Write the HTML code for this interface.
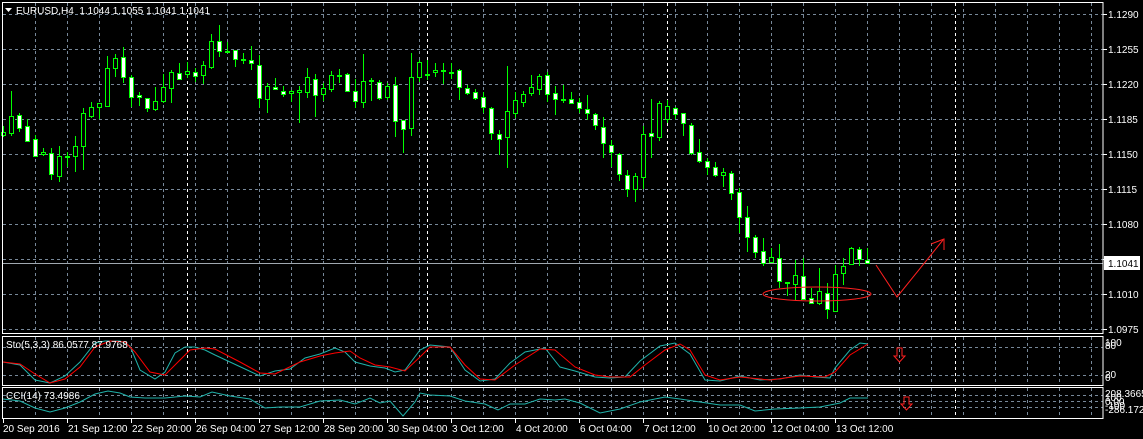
<!DOCTYPE html>
<html><head><meta charset="utf-8">
<style>
html,body{margin:0;padding:0;background:#000;width:1143px;height:439px;overflow:hidden}
svg{display:block}
text{font-family:"Liberation Sans",sans-serif;font-size:10px;fill:#fff}
</style></head>
<body>
<svg id="s" width="1143" height="439" xmlns="http://www.w3.org/2000/svg"></svg>
<script>
var s=document.getElementById('s');var o='';
function L(x1,y1,x2,y2,c,d,w){o+='<line x1="'+x1+'" y1="'+y1+'" x2="'+x2+'" y2="'+y2+'" stroke="'+c+'" stroke-width="'+(w||1)+'"'+(d?' stroke-dasharray="'+d+'"':'')+'/>';}
function T(x,y,t,a,c){o+='<text x="'+x+'" y="'+y+'"'+(a?' text-anchor="'+a+'"':'')+(c?' style="fill:'+c+'"':'')+'>'+t+'</text>';}
var G='#778899';
// grids
for(var x=35;x<1103;x+=32){L(x+.5,3,x+.5,333,G,'3,3');L(x+.5,337,x+.5,385,G,'3,3');L(x+.5,388,x+.5,418,G,'3,3');}
[187,427,667,955].forEach(function(x){L(x+.5,3,x+.5,333,'#fff','3,3');L(x+.5,337,x+.5,385,'#fff','3,3');L(x+.5,388,x+.5,418,'#fff','3,3');});
var pr=['1.1290','1.1255','1.1220','1.1185','1.1150','1.1115','1.1080','1.1045','1.1010','1.0975'];
for(var i=0;i<10;i++){var y=14+35*i;L(3,y+.5,1103,y+.5,G,'3,3');L(1103,y+.5,1107,y+.5,'#fff');T(1108,y+4,pr[i]);}
L(3,347.5,1103,347.5,G,'3,3');L(3,375.5,1103,375.5,G,'3,3');
L(3,395.5,1103,395.5,G,'3,3');L(3,401.5,1103,401.5,G,'3,3');L(3,407.5,1103,407.5,G,'3,3');
// price line
L(3,263.5,1103,263.5,'#a0a8b0');
// candles [h,top,bot,l,bear]
var C=[[126,132,135,137,0],[91,116,133,136,0],[113,115,128,132,1],[119,126,141,141,1],[135,139,156,156,1],[148,152,154,156,0],[148,153,174,180,1],[146,156,176,182,0],[152,156,157,167,1],[136,146,156,172,0],
[108,113,146,170,0],[102,107,116,118,0],[103,103,107,119,0],[56,68,106,107,0],[54,58,68,77,0],[47,57,77,83,1],[75,77,97,107,1],[92,95,97,106,1],[98,98,108,112,1],[87,101,109,111,0],
[74,87,101,103,0],[70,72,88,103,0],[63,73,79,79,1],[62,71,74,78,0],[68,72,76,82,1],[61,65,75,84,0],[34,41,67,69,0],[25,41,51,57,1],[42,51,52,53,1],[50,50,59,67,1],
[53,59,60,64,1],[46,60,63,70,1],[55,65,98,108,1],[83,86,99,113,0],[78,87,89,89,1],[86,91,94,97,1],[90,91,93,102,0],[86,90,92,123,0],[68,77,92,98,0],[74,79,95,117,1],
[83,88,94,101,0],[71,75,89,92,0],[69,75,75,83,1],[73,74,91,91,1],[79,91,101,108,1],[54,81,102,108,0],[78,80,81,101,1],[80,82,98,100,1],[83,86,97,100,0],[77,85,121,137,1],
[120,120,129,153,1],[53,77,128,136,0],[60,62,77,82,0],[60,74,75,80,1],[63,70,72,77,0],[63,70,71,84,1],[63,72,73,79,1],[69,70,87,100,1],[85,88,93,95,1],[89,92,98,100,1],
[92,97,107,113,1],[107,108,133,140,1],[130,134,139,155,1],[66,111,137,168,0],[92,100,113,118,0],[91,94,102,107,0],[75,87,93,96,0],[74,76,89,95,0],[72,75,94,102,1],[86,93,99,115,1],
[85,99,100,103,1],[92,99,103,103,1],[98,102,108,113,1],[95,109,113,120,1],[113,114,125,130,1],[117,127,143,158,1],[140,145,152,167,1],[153,154,174,181,1],[170,175,189,197,1],[173,176,189,202,0],
[126,134,177,189,0],[99,133,136,158,1],[101,103,137,141,0],[100,106,119,123,0],[107,108,114,119,1],[113,113,123,136,1],[123,125,153,155,1],[139,152,161,163,1],[158,161,167,175,1],[162,167,175,177,1],
[168,172,175,187,0],[171,173,193,200,1],[188,192,217,233,1],[206,217,237,252,1],[235,237,252,258,1],[238,251,263,266,1],[248,257,262,262,0],[244,258,281,288,1],[282,282,283,296,1],[260,275,284,300,0],
[258,276,299,300,1],[288,298,303,303,1],[268,291,303,305,0],[283,293,309,319,1],[265,274,311,311,0],[258,266,273,285,0],[247,248,264,264,0],[247,249,259,266,1],[248,260,263,263,1]];
for(var k=0;k<C.length;k++){var c=C[k],cx=3.5+8*k;
L(cx,c[0],cx,c[3],'#00ff00');
var h=Math.max(c[2]-c[1],1);
o+='<rect x="'+(cx-2)+'" y="'+(c[1]+.5)+'" width="4" height="'+h+'" fill="'+(c[4]?'#fff':'#000')+'" stroke="#00ff00" stroke-width="1"/>';}
// red annotations
o+='<ellipse cx="817" cy="294" rx="54" ry="7" fill="none" stroke="#ff2020" stroke-width="1"/>';
o+='<polyline points="876,265 897,297 943,240" fill="none" stroke="#ff2020"/>';
o+='<polyline points="931,244 944,239 944,250" fill="none" stroke="#ff2020"/>';
// indicators
function P(pts,c){o+='<polyline points="'+pts+'" fill="none" stroke="'+c+'" stroke-width="1"/>';}
P("3,362 20,365 35,380 50,383 65,376 80,362 95,343 105,341 120,341 130,346 140,370 155,379 165,372 175,353 185,347 195,347 205,350 215,355 230,362 245,369 260,376 275,371 290,369 305,358 320,354 335,348 345,352 355,362 370,366 385,368 395,372 405,370 420,350 430,345 450,347 465,370 480,381 495,379 510,363 525,352 545,348 560,367 575,371 595,377 610,378 625,377 640,361 660,346 675,343 690,354 705,380 720,381 740,376 760,380 780,379 800,375 815,377 830,378 835,368 850,350 860,343 868,344","#20b2aa");
P("3,362 20,364 35,374 50,383 65,379 80,367 95,347 110,341 125,342 135,352 150,372 165,375 180,360 190,350 205,348 215,349 240,362 260,373 275,374 300,362 320,356 335,353 350,351 360,358 375,365 390,367 405,371 420,357 430,347 450,347 465,365 480,379 495,380 515,365 540,349 555,350 575,367 595,375 610,377 630,377 645,365 665,350 680,344 690,350 705,375 720,380 740,377 770,380 800,376 825,377 835,372 850,355 868,344","#ff0000");
P("3,399 20,401 35,408 50,412 65,408 80,402 95,394 108,391 120,393 130,397 145,398 165,398 185,396 200,397 212,392 230,396 250,399 265,408 280,407 300,407 320,401 340,400 355,404 370,398 380,403 390,401 403,416 415,402 420,393 430,395 450,396 465,401 485,404 498,410 510,404 525,404 540,399 555,400 565,399 580,403 600,413 620,409 640,402 665,397 680,399 700,402 720,405 740,405 755,411 775,409 800,408 820,407 840,403 850,398 868,398","#20b2aa");
o+='<path d="M897,348h5v8h3l-5.5,6l-5.5,-6h3z" fill="none" stroke="#ff2020"/>';
o+='<path d="M904,397h5v7h3l-5.5,6l-5.5,-6h3z" fill="none" stroke="#ff2020"/>';
// frames
o+='<rect x="2.5" y="2.5" width="1100.5" height="331" fill="none" stroke="#fff"/>';
o+='<rect x="2.5" y="336.5" width="1100.5" height="49" fill="none" stroke="#fff"/>';
o+='<rect x="2.5" y="387.5" width="1100.5" height="31" fill="none" stroke="#fff"/>';
// labels
o+='<path d="M5,8h7l-3.5,4z" fill="#fff"/>';
T(16,14,'EURUSD,H4&#160; 1.1044 1.1055 1.1041 1.1041');
T(6,348,'Sto(5,3,3) 86.0577 87.9768');
T(6,399,'CCI(14) 73.4986');
o+='<rect x="1104" y="256" width="36" height="14" fill="#fff"/>';
T(1108,267,'1.1041','', '#000');
T(1105,346,'100');T(1105,349,'80');T(1105,378,'20');T(1105,381,'0');
T(1105,397,'208.3665');T(1105,401,'100');T(1105,405,'0.00');T(1105,409,'-100');T(1105,413,'-286.172');
var tl=[[3,'20 Sep 2016'],[67,'21 Sep 12:00'],[131,'22 Sep 20:00'],[195,'26 Sep 04:00'],[259,'27 Sep 12:00'],[323,'28 Sep 20:00'],[387,'30 Sep 04:00'],[451,'3 Oct 12:00'],[515,'4 Oct 20:00'],[579,'6 Oct 04:00'],[643,'7 Oct 12:00'],[707,'10 Oct 20:00'],[771,'12 Oct 04:00'],[835,'13 Oct 12:00']];
tl.forEach(function(t){L(t[0]+.5,418,t[0]+.5,423,'#fff');T(t[0]+(t[0]==3?0:1),432,t[1]);});
s.innerHTML=o;
</script>
</body></html>
